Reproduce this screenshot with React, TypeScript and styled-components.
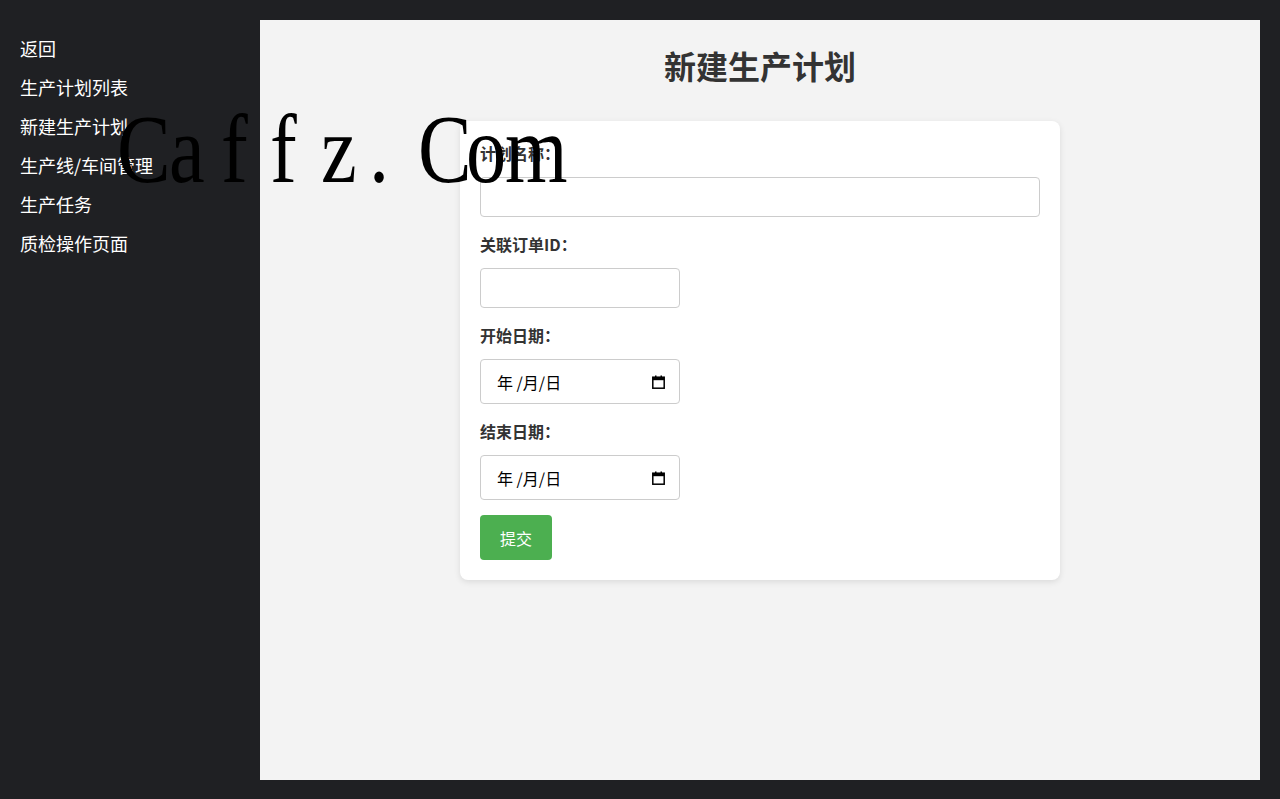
import styled, { createGlobalStyle } from 'styled-components';

const GlobalStyle = createGlobalStyle`
  html, body {
    margin: 0;
    padding: 0;
    background: #1f2023;
  }
  * {
    box-sizing: border-box;
  }
  body {
    font-family: "Noto Sans CJK SC", "Noto Sans", sans-serif;
  }
`;

const Layout = styled.div`
  display: flex;
  min-height: 799px;
  background: #1f2023;
  position: relative;
`;

const Sidebar = styled.nav`
  width: 260px;
  flex-shrink: 0;
  padding: 29px 20px 0;
  display: flex;
  flex-direction: column;
`;

const NavLink = styled.a`
  display: block;
  color: #ffffff;
  font-size: 18px;
  line-height: 39px;
  text-decoration: none;
  cursor: pointer;
`;

const Main = styled.main`
  flex: 1;
  margin: 20px 20px 19px 0;
  background: #f3f3f3;
  padding: 20px;
`;

const Title = styled.h1`
  margin: 3px 0 0;
  text-align: center;
  font-size: 32px;
  line-height: 44px;
  font-weight: 700;
  color: #333333;
`;

const Card = styled.form`
  width: 600px;
  margin: 34px auto 0;
  background: #ffffff;
  border-radius: 8px;
  padding: 20px;
  box-shadow: 0 2px 6px rgba(0, 0, 0, 0.1);
`;

const Label = styled.label`
  display: block;
  font-size: 16px;
  line-height: 24px;
  font-weight: 700;
  color: #333333;
  margin-bottom: 12px;
`;

const TextInput = styled.input<{ $width?: number }>`
  display: block;
  width: ${({ $width }) => ($width ? `${$width}px` : '100%')};
  height: 40px;
  border: 1px solid #cccccc;
  border-radius: 4px;
  padding: 0 10px;
  font-size: 16px;
  margin-bottom: 15px;
  background: #ffffff;
  outline: none;
`;

const DateBox = styled.div`
  display: flex;
  align-items: center;
  justify-content: space-between;
  width: 200px;
  height: 45px;
  border: 1px solid #cccccc;
  border-radius: 4px;
  padding: 0 14px 0 16px;
  margin-bottom: 15px;
  background: #ffffff;
  font-size: 16px;
  color: #000000;
  cursor: text;
`;

const DateText = styled.span`
  white-space: pre;
  line-height: 20px;
  padding-top: 1px;
`;

const SubmitButton = styled.button`
  height: 45px;
  padding: 0 20px;
  border: none;
  border-radius: 4px;
  background: #4caf50;
  color: #ffffff;
  font-family: inherit;
  font-size: 16px;
  cursor: pointer;
`;

const Watermark = styled.div`
  position: absolute;
  left: 117px;
  top: 100px;
  display: flex;
  font-family: "Liberation Serif", serif;
  font-size: 98px;
  line-height: 1;
  color: #000000;
  pointer-events: none;
  white-space: pre;
`;

const WatermarkChar = styled.span<{ $w: number }>`
  display: inline-block;
  width: ${({ $w }) => $w}px;
  transform: scaleX(0.82);
  transform-origin: left center;
`;

const CalendarIcon = () => (
  <svg width="13" height="14" viewBox="0 0 13 14">
    <rect x="0.8" y="2.2" width="11.4" height="11" fill="none" stroke="#000" strokeWidth="1.5" />
    <rect x="0.8" y="2.2" width="11.4" height="3" fill="#000" />
    <rect x="3" y="0.5" width="1.5" height="2.5" fill="#000" />
    <rect x="8.5" y="0.5" width="1.5" height="2.5" fill="#000" />
  </svg>
);

const DateField = () => (
  <DateBox>
    <DateText>年 /月/日</DateText>
    <CalendarIcon />
  </DateBox>
);

const navItems = ['返回', '生产计划列表', '新建生产计划', '生产线/车间管理', '生产任务', '质检操作页面'];

// char + cell width of the watermark glyphs
const watermark: [string, number][] = [
  ['C', 52],
  ['a', 52],
  ['f', 49],
  ['f', 51],
  ['z', 48],
  ['.', 49],
  ['C', 48],
  ['o', 39],
  ['m', 60],
];

export default function App() {
  return (
    <>
      <GlobalStyle />
      <Layout>
        <Sidebar>
          {navItems.map((item) => (
            <NavLink key={item}>{item}</NavLink>
          ))}
        </Sidebar>
        <Main>
          <Title>新建生产计划</Title>
          <Card onSubmit={(e) => e.preventDefault()}>
            <Label>计划名称：</Label>
            <TextInput type="text" />
            <Label>关联订单ID：</Label>
            <TextInput type="text" $width={200} />
            <Label>开始日期：</Label>
            <DateField />
            <Label>结束日期：</Label>
            <DateField />
            <SubmitButton type="submit">提交</SubmitButton>
          </Card>
        </Main>
        <Watermark aria-hidden>
          {watermark.map(([ch, w], i) => (
            <WatermarkChar key={i} $w={w}>
              {ch}
            </WatermarkChar>
          ))}
        </Watermark>
      </Layout>
    </>
  );
}
